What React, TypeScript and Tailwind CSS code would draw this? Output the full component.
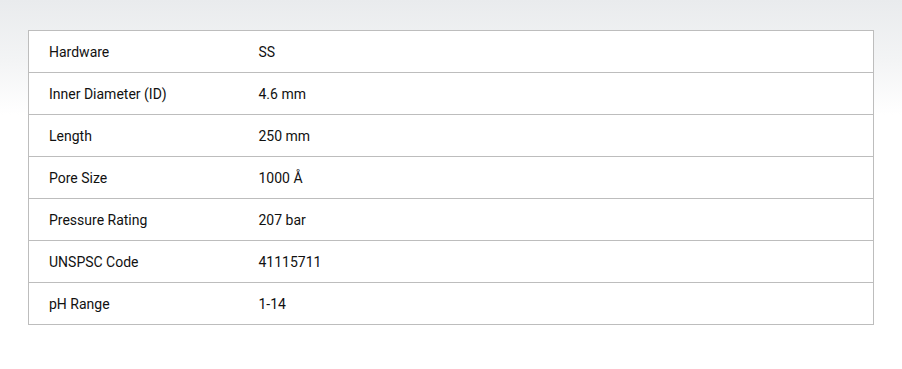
import React from 'react';

const specs: [string, string][] = [
  ['Hardware', 'SS'],
  ['Inner Diameter (ID)', '4.6 mm'],
  ['Length', '250 mm'],
  ['Pore Size', '1000 Å'],
  ['Pressure Rating', '207 bar'],
  ['UNSPSC Code', '41115711'],
  ['pH Range', '1-14'],
];

export default function App() {
  return (
    <div className="w-[902px] h-[369px] bg-white bg-[linear-gradient(to_bottom,#e9ebed_0px,#f3f4f5_60px,#ffffff_115px)] pt-[30px] pl-[28px] font-['Roboto',sans-serif]">
      <table className="w-[846px] table-fixed border-collapse border border-[#bdbdbd] bg-white text-[14px] text-[#111]">
        <tbody>
          {specs.map(([label, value]) => (
            <tr key={label} className="h-[42px] border-b border-[#bdbdbd]">
              <td className="w-[230px] pl-[20px] pt-[2px] align-middle">{label}</td>
              <td className="pt-[2px] align-middle">{value}</td>
            </tr>
          ))}
        </tbody>
      </table>
    </div>
  );
}
